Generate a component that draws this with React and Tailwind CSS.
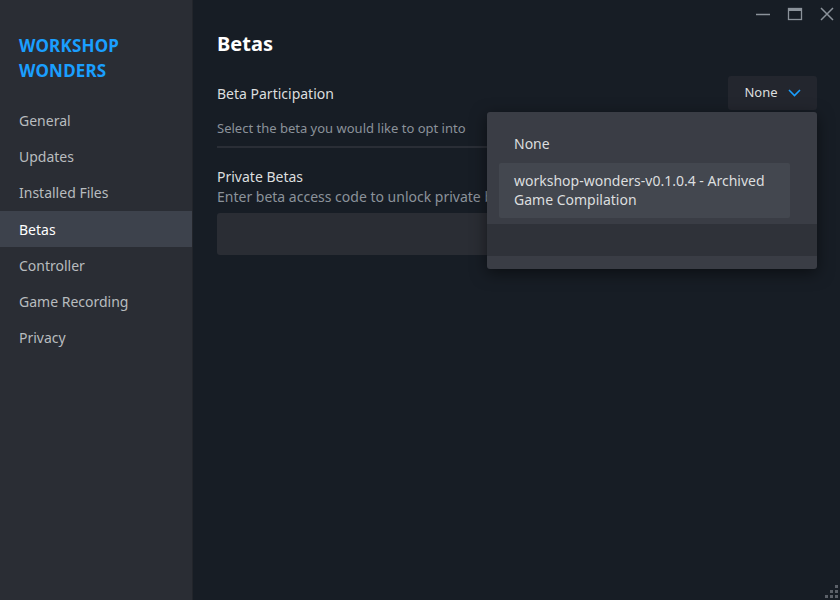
import React from "react";

const nav = ["General", "Updates", "Installed Files", "Betas", "Controller", "Game Recording", "Privacy"];

export default function App() {
  return (
    <div className="relative flex h-[600px] w-[840px] overflow-hidden bg-[#171d25]" style={{ fontFamily: '"Noto Sans", "Open Sans", sans-serif' }}>
      {/* Sidebar */}
      <div className="flex w-[193px] shrink-0 flex-col border-r border-[#22252b] bg-[#2a2d34]">
        <div className="px-[19px] pt-[33px] text-[17px] font-bold leading-[25px] tracking-[0.2px] text-[#1a9fff]">
          WORKSHOP
          <br />
          WONDERS
        </div>
        <div className="mt-[19px] flex flex-col">
          {nav.map((n) => (
            <div
              key={n}
              className={
                "flex h-[36.3px] items-center px-[19px] text-[14px] " +
                (n === "Betas" ? "bg-[#3d424c] text-white" : "text-[#b8bcbf]")
              }
            >
              {n}
            </div>
          ))}
        </div>
      </div>

      {/* Main */}
      <div className="relative flex flex-1 flex-col pl-[24px] pr-[23px]">
        <div className="pt-[30px] text-[20px] font-bold leading-[28px] text-white">Betas</div>
        <div className="mt-[18px] flex items-center justify-between">
          <div className="text-[14px] text-[#dcdedf]">Beta Participation</div>
          <div className="flex h-[34px] w-[89px] items-center justify-center gap-[10px] rounded-[3px] bg-[#23262e] text-[13px] text-[#dcdedf]">
            None
            <svg width="13" height="8" viewBox="0 0 13 8" fill="none">
              <path d="M1 1l5.5 5.5L12 1" stroke="#1a9fff" strokeWidth="1.6" />
            </svg>
          </div>
        </div>
        <div className="mt-[8px] text-[13px] leading-[20px] text-[#8b929a]">Select the beta you would like to opt into</div>
        <div className="mt-[8px] h-[2px] bg-[#2a2e36]" />
        <div className="mt-[19px] text-[14px] leading-[20px] text-[#dcdedf]">Private Betas</div>
        <div className="text-[14px] leading-[20px] text-[#8b929a]">Enter beta access code to unlock private betas</div>
        <div className="mt-[6px] h-[42px] rounded-[3px] bg-[#2a2d34]" />

        {/* Dropdown menu */}
        <div className="absolute left-[294px] top-[112px] w-[330px] overflow-hidden rounded-[3px] bg-[#3a3d45] shadow-[0_4px_16px_rgba(0,0,0,0.5)]">
          <div className="px-[12px] pt-[12px]">
            <div className="flex h-[39px] items-center px-[15px] text-[14px] text-[#dcdedf]">None</div>
            <div className="mr-[15px] rounded-[2px] bg-[#43474f] px-[15px] pb-[9px] pt-[8px] text-[14px] leading-[19px] text-[#dcdedf]">
              workshop-wonders-v0.1.0.4 - Archived Game Compilation
            </div>
          </div>
          <div className="mt-[6px] h-[32px] bg-[#2f3239]" />
          <div className="h-[13px]" />
        </div>
      </div>

      {/* Window controls */}
      <div className="absolute right-[3px] top-[4px] flex items-center gap-[12px]">
        <svg width="20" height="20" viewBox="0 0 20 20">
          <path d="M3 10.5h14" stroke="#8b929a" strokeWidth="1.5" />
        </svg>
        <svg width="20" height="20" viewBox="0 0 20 20">
          <rect x="3.5" y="4.5" width="13" height="11" fill="none" stroke="#8b929a" strokeWidth="1.3" />
          <path d="M3.5 6h13" stroke="#8b929a" strokeWidth="2" />
        </svg>
        <svg width="20" height="20" viewBox="0 0 20 20">
          <path d="M4 4l12 12M16 4L4 16" stroke="#8b929a" strokeWidth="1.5" />
        </svg>
      </div>

      {/* Resize grip */}
      <div className="absolute bottom-[1px] right-[1px]">
        <svg width="14" height="14" viewBox="0 0 14 14">
          <rect x="10" y="0" width="3" height="3" fill="#5b6068" />
          <rect x="5" y="5" width="3" height="3" fill="#5b6068" />
          <rect x="10" y="5" width="3" height="3" fill="#5b6068" />
          <rect x="0" y="10" width="3" height="3" fill="#5b6068" />
          <rect x="5" y="10" width="3" height="3" fill="#5b6068" />
          <rect x="10" y="10" width="3" height="3" fill="#5b6068" />
        </svg>
      </div>
    </div>
  );
}
